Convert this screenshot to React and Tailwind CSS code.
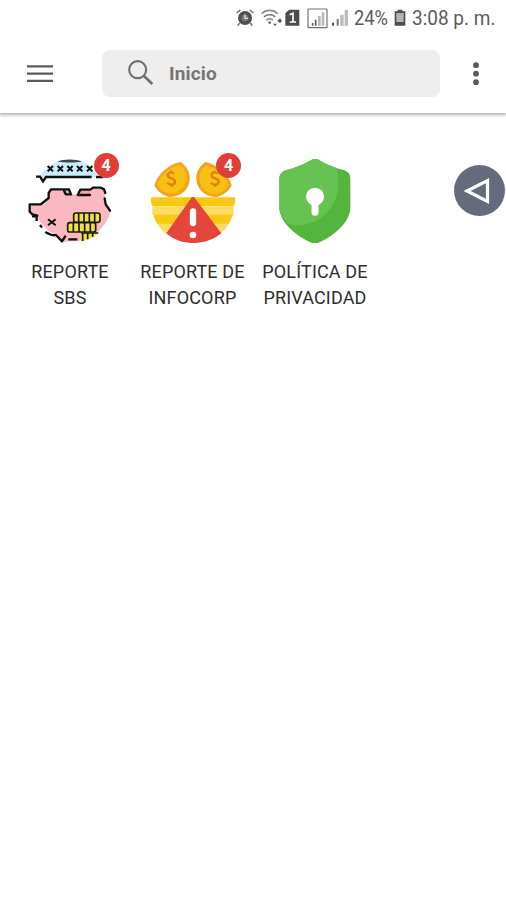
import React from 'react';

const AlarmIcon = () => (
  <svg className="w-[18px] h-[18px]" viewBox="29 26 54 54" fill="none">
    <circle cx="56" cy="53" r="21" fill="#4f4f4f" />
    <path d="M31 38L42 29M81 38L70 29M40 68L34 76M72 68L78 76" stroke="#6b6b6b" strokeWidth="4.5" />
    <circle cx="56" cy="53" r="10" fill="#7c7c7c" />
    <path d="M56 42V54H66" stroke="#dddddd" strokeWidth="4" />
  </svg>
);

const WifiIcon = () => (
  <svg className="w-[21px] h-[18px]" viewBox="104 26 63 54" fill="none">
    <path d="M106 40C119 27 141 27 154 40" stroke="#8d8d8d" strokeWidth="5" />
    <path d="M113 50C122 41 138 41 147 50" stroke="#7a7a7a" strokeWidth="5" />
    <path d="M120 60C126 54 134 54 140 60" stroke="#9a9a9a" strokeWidth="5" />
    <circle cx="130" cy="67" r="4" fill="#6a6a6a" />
    <path d="M140 70L146 77L152 70ZM153 62L161 54L167 62L161 68Z" fill="#555555" />
  </svg>
);

const SimIcon = () => (
  <svg className="w-[15px] h-[18px]" viewBox="177 26 45 54" fill="none">
    <path d="M189 28H220V76H178V39Z" fill="#4d4d4d" />
    <path d="M191 43L201 39V64M191 65H210" stroke="#ffffff" strokeWidth="5" />
  </svg>
);

const BoxedSignalIcon = () => (
  <svg className="w-[21px] h-[21px]" viewBox="242 21 63 63" fill="none">
    <rect x="245" y="24" width="57" height="56" rx="2" stroke="#727272" strokeWidth="3.5" />
    <path d="M259 66V74M268 56V74" stroke="#5d5d5d" strokeWidth="5" />
    <path d="M279 45V74M290 34V74" stroke="#b8b8b8" strokeWidth="8" />
  </svg>
);

const SignalIcon = () => (
  <svg className="w-[18px] h-[18px]" viewBox="314 26 54 54" fill="none">
    <path d="M320 67V76" stroke="#4d4d4d" strokeWidth="6" />
    <path d="M334 56V76" stroke="#777777" strokeWidth="6" />
    <path d="M347 43V76M360 29V76" stroke="#bbbbbb" strokeWidth="10" />
  </svg>
);

const BatteryIcon = () => (
  <svg className="w-[12px] h-[18px]" viewBox="143 26 36 54" fill="none">
    <path d="M154 28H168V33H177V76H145V33H154Z" fill="#4d4d4d" />
    <rect x="150" y="38" width="22" height="27" fill="#b5b5b5" />
  </svg>
);

const StatusBar = () => (
  <div className="h-9 relative z-10 bg-white flex items-center justify-end pr-[10px] text-[21px] leading-none text-[#5c5c5c]">
    <AlarmIcon />
    <span className="w-[7px]" />
    <WifiIcon />
    <span className="w-[3px]" />
    <SimIcon />
    <span className="w-[7px]" />
    <BoxedSignalIcon />
    <span className="w-[3px]" />
    <SignalIcon />
    <span className="w-[34px] ml-[5px] whitespace-nowrap origin-left scale-x-[0.87]">24%</span>
    <span className="w-[6px]" />
    <BatteryIcon />
    <span className="w-[84px] ml-[6px] whitespace-nowrap origin-left scale-x-[0.905]">3:08 p. m.</span>
  </div>
);

const Header = () => (
  <header className="h-[77px] flex items-center pb-px shadow-[0_1px_3px_1px_rgba(0,0,0,0.3)]">
    <button className="ml-[27px]">
      <svg className="block w-[26px] h-[18px]" viewBox="0 0 26 18" stroke="#5a5a5a" strokeWidth="2.3">
        <path d="M0 1.4H26M0 8.6H26M0 15.8H26" />
      </svg>
    </button>
    <div className="ml-[49px] -mt-[2px] w-[338px] h-[47px] rounded-lg bg-[#eeeeee] flex items-center">
      <svg className="ml-[26px] w-[26px] h-[26px]" viewBox="384 61 78 78" fill="none" stroke="#707070">
        <circle cx="413" cy="90" r="25.5" strokeWidth="6.5" />
        <path d="M432 109L457 133" strokeWidth="8" />
      </svg>
      <span className="ml-[15px] mt-[3px] text-[19px] tracking-[0.15px] font-bold text-[#757575]">Inicio</span>
    </div>
    <button className="ml-[33px]">
      <svg className="block w-[6px] h-[24px]" viewBox="0 0 6 24" fill="#5a5a5a">
        <circle cx="3" cy="3.2" r="2.9" />
        <circle cx="3" cy="11.7" r="2.9" />
        <circle cx="3" cy="20.2" r="2.9" />
      </svg>
    </button>
  </header>
);

const PigIcon = () => (
  <svg className="w-[84px] h-[84px]" viewBox="24 42 252 252" fill="none">
    {/* Speech bubble */}
    <path d="M58 95C72 75 96 53 122 46H178C205 54 222 76 232 95H80L70 110L64 95Z" fill="#c9ecfa" />
    <path d="M112 50C130 41 168 41 186 50C165 53 135 53 112 50Z" fill="#454545" />
    <path d="M48 95H60L69 109L78 96H215M228 96H250" stroke="#111111" strokeWidth="7" />
    <path
      d="M83 63L99 79M99 63L83 79M113 63L129 79M129 63L113 79M142 63L158 79M158 63L142 79M171 63L187 79M187 63L171 79M201 63L217 79M217 63L201 79"
      stroke="#111111"
      strokeWidth="6"
    />
    {/* Upside down pig */}
    <path
      d="M90 135H128L136 148H172L178 135H205L214 130H238L255 142V167L273 196C264 235 232 268 207 279L184 287L125 291L108 270C82 260 56 232 50 208L29 203V180L66 177C76 171 86 163 87 156Z"
      fill="#fbb7c2"
    />
    <path d="M130 134H150L155 149H137ZM180 134H210V149H173Z" fill="#f4a6b2" />
    <path
      d="M52 212L37 208L29 200V178H62L86 159V144L93 133H147L153 148H137L131 134M210 150H173L181 134H211L219 128H242L252 133L256 144M254 160L257 178L270 197"
      stroke="#111111"
      strokeWidth="7"
      strokeLinejoin="round"
      strokeLinecap="round"
    />
    <path d="M36 214H50V228M60 240L66 248M76 261C89 269 102 272 108 270L126 289L137 272M145 283H172" stroke="#111111" strokeWidth="7" strokeLinejoin="round" />
    <path d="M84 223L107 241M107 223L84 241" stroke="#111111" strokeWidth="6" />
    {/* Coin stacks */}
    <g stroke="#1b1a10" strokeWidth="5">
      <rect x="161" y="204" width="79" height="28" rx="7" fill="#f0e04a" />
      <path d="M176 204V232M192 204V232M208 204V232M224 204V232" />
      <rect x="143" y="233" width="84" height="28" rx="7" fill="#f0e04a" />
      <path d="M160 233V261M177 233V261M194 233V261M211 233V261" />
    </g>
    <path d="M182 263H236C224 276 207 284 184 290Z" fill="#f0e04a" />
    <path d="M183 264H235M188 264V288M203 264V283M218 264V275" stroke="#1b1a10" strokeWidth="5" />
  </svg>
);

const CoinsIcon = () => (
  <svg className="w-[84px] h-[84px]" viewBox="31 42 252 252" fill="none">
    {/* Coins */}
    <path d="M41 121C51 87 83 58 120 51C143 68 152 91 145 115C137 142 114 156 86 156C66 151 50 140 41 121Z" fill="#f5a21f" />
    <path d="M49 117C60 90 88 65 119 60C136 76 142 95 135 113C127 134 109 146 87 145C69 143 56 132 49 117Z" fill="#f9c012" />
    <path d="M194 51C231 58 264 89 273 121C264 140 248 151 228 156C200 156 177 142 169 115C162 91 171 68 194 51Z" fill="#f5a21f" />
    <path d="M195 61C224 68 254 92 264 120C256 135 243 144 226 146C203 145 186 134 179 113C172 94 180 76 195 61Z" fill="#f9c012" />
    <g stroke="#dd8216" strokeWidth="7">
      <path d="M101 86C91 78 80 84 82 92C84 103 103 98 103 110C102 122 87 121 80 113M91 77V84M93 118V125" />
      <path d="M232 86C222 78 211 84 213 92C215 103 234 98 234 110C233 122 218 121 211 113M222 77V84M224 118V125" />
    </g>
    {/* Layers */}
    <path d="M32 157H282L285 170L278 184H36L30 170Z" fill="#f9c814" />
    <path d="M35 184H279V210H35Z" fill="#fcdb60" />
    <path d="M38 209H276C272 220 269 229 264 237H50C45 228 41 220 38 209Z" fill="#f9c814" />
    <path d="M50 236H264C257 248 248 258 238 266H76C66 258 57 248 50 236Z" fill="#fcdb60" />
    {/* Warning */}
    <path d="M151 160Q157 151 163 160L242 265C196 304 119 304 77 265Z" fill="#e5463b" />
    <path d="M157 199V234" stroke="#ffffff" strokeWidth="19" strokeLinecap="round" />
    <circle cx="157" cy="270" r="10" fill="#ffffff" />
  </svg>
);

const ShieldIcon = () => (
  <svg className="w-[84px] h-[84px]" viewBox="24 42 252 252" fill="none">
    <path
      d="M140 44Q150 39 160 44C185 59 212 69 238 76Q255 82 256 98V188C256 230 207 273 160 293Q150 299 140 293C93 273 43 230 43 188V98Q45 82 62 76C88 69 115 59 140 44Z"
      fill="#53b53b"
    />
    <path
      d="M140 44Q150 39 160 44C178 55 195 63 213 68C227 112 221 157 195 191C167 229 124 245 80 241C57 225 43 206 43 188V98Q45 82 62 76C88 69 115 59 140 44Z"
      fill="#66c352"
    />
    <circle cx="150" cy="155" r="27" fill="#ffffff" />
    <path d="M150 165V202" stroke="#ffffff" strokeWidth="21" strokeLinecap="round" />
  </svg>
);

const items = [
  { icon: PigIcon, lines: ['REPORTE', 'SBS'], badge: 4 },
  { icon: CoinsIcon, lines: ['REPORTE DE', 'INFOCORP'], badge: 4 },
  { icon: ShieldIcon, lines: ['POLÍTICA DE', 'PRIVACIDAD'] },
];

const MenuItem = ({ icon: Icon, lines, badge }) => (
  <a className="w-[122.5px] flex flex-col items-center">
    <div className="relative">
      <Icon />
      {badge && (
        <span className="absolute -top-[6px] -right-[6.5px] w-[25px] h-[25px] rounded-full bg-[#e03e36] text-white text-base font-bold flex items-center justify-center">
          {badge}
        </span>
      )}
    </div>
    <div className="mt-[15.5px] text-lg leading-[26px] tracking-[0.15px] text-[#2e2e2e] text-center whitespace-nowrap">
      {lines.map((line) => (
        <div key={line}>{line}</div>
      ))}
    </div>
  </a>
);

const App = () => {
  return (
    <div className="relative w-full h-screen overflow-hidden bg-white font-['Roboto',sans-serif]">
      <StatusBar />
      <Header />

      <main className="flex pt-[46px] pl-[8.75px]">
        {items.map((item) => (
          <MenuItem key={item.lines[0]} {...item} />
        ))}
      </main>

      {/* Floating back button */}
      <button className="absolute top-[165px] right-[1px] w-[51px] h-[51px] rounded-full bg-[#666b7b] flex items-center justify-center">
        <svg className="w-[28px] h-[28px] -translate-x-[2px]" viewBox="0 0 28 28" fill="none">
          <path d="M3 14L23.5 3.5V24.5Z" stroke="#ffffff" strokeWidth="3.2" />
        </svg>
      </button>
    </div>
  );
};

export default App;
